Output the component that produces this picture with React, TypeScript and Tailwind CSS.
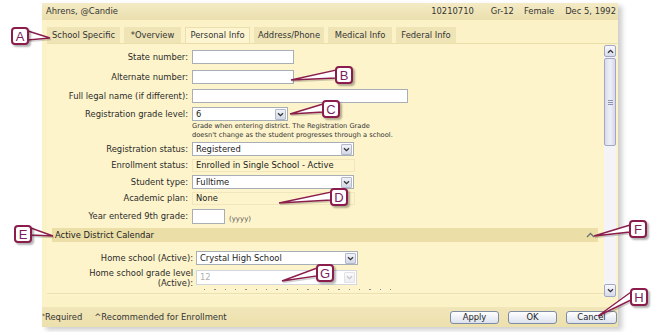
import React from "react";

type Kids = { children?: React.ReactNode };

const tabs = [
  { label: "School Specific", w: "w-[73px]" },
  { label: "*Overview", w: "w-[57px]" },
  { label: "Personal Info", w: "w-[65px]", active: true },
  { label: "Address/Phone", w: "w-[70px]" },
  { label: "Medical Info", w: "w-[64px]" },
  { label: "Federal Info", w: "w-[60px]" },
];

// tip, then two base points on the box edge
const wedges: number[][][] = [
  [[50, 38], [28, 31], [28, 40]],
  [[291, 80], [336, 70], [336, 78]],
  [[290, 114], [323, 104], [323, 112]],
  [[279, 203], [331, 192], [331, 200]],
  [[53, 236], [31, 228], [31, 235]],
  [[594, 236], [630, 225], [630, 232]],
  [[282, 281], [317, 268], [317, 276]],
  [[598, 316], [631, 292], [631, 300]],
];

const callouts = [
  { l: "A", pos: "left-[11px] top-[27px]" },
  { l: "B", pos: "left-[335px] top-[66px]" },
  { l: "C", pos: "left-[322px] top-[100px]" },
  { l: "D", pos: "left-[330px] top-[188px]" },
  { l: "E", pos: "left-[14px] top-[225px]" },
  { l: "F", pos: "left-[629px] top-[220px]" },
  { l: "G", pos: "left-[316px] top-[264px]" },
  { l: "H", pos: "left-[630px] top-[288px]" },
];

function ChevronDown({ color = "#333" }: { color?: string }) {
  return (
    <svg width="7" height="5" viewBox="0 0 7 5">
      <path d="M1 1.2 L3.5 3.7 L6 1.2" stroke={color} strokeWidth="1.3" fill="none" />
    </svg>
  );
}

function ChevronUp({ color = "#333" }: { color?: string }) {
  return (
    <svg width="7" height="5" viewBox="0 0 7 5">
      <path d="M1 3.8 L3.5 1.3 L6 3.8" stroke={color} strokeWidth="1.3" fill="none" />
    </svg>
  );
}

function Input({ className }: { className: string }) {
  return <div className={`border border-[#a8aeb6] bg-white ${className}`} />;
}

function Select({ value, className, disabled }: { value: string; className: string; disabled?: boolean }) {
  return (
    <div
      className={`flex items-center border bg-white ${
        disabled ? "border-[#d3d6dc] text-[#b0b0b0]" : "border-[#a8aeb6] text-[#222]"
      } ${className}`}
    >
      <span className="flex-1 pl-[3px]">{value}</span>
      <div
        className={`mr-[1px] flex h-[11px] w-[11px] items-center justify-center rounded-[1px] border bg-gradient-to-b ${
          disabled ? "border-[#e0e2e8] from-[#fafafc] to-[#eceef3]" : "border-[#b3b9cb] from-[#f1f3f8] to-[#d3d8e6]"
        }`}
      >
        <ChevronDown color={disabled ? "#c4c4c4" : "#333"} />
      </div>
    </div>
  );
}

function ReadOnly({ value }: { value: string }) {
  return (
    <div className="flex h-[13px] w-[163px] items-center border border-[#f1e6bc] pl-[3px] text-[#222]">{value}</div>
  );
}

function Row({ label, gap = "ml-[4px]", className, children }: { label: string; gap?: string; className: string } & Kids) {
  return (
    <div className={`flex items-center ${className}`}>
      <div className="w-[141px] text-right text-[#2a2a2a]">{label}</div>
      <div className={gap}>{children}</div>
    </div>
  );
}

function Button({ label, className }: { label: string; className: string }) {
  return (
    <div
      className={`flex h-[13px] items-center justify-center rounded-[3px] border border-[#7d8ba4] bg-gradient-to-b from-white to-[#dce2ee] text-[#222] ${className}`}
    >
      {label}
    </div>
  );
}

function Scrollbar() {
  return (
    <div className="mt-[1px] mr-[1px] flex h-[252px] w-[12px] flex-col bg-[#f3f3f8]">
      <div className="flex h-[12px] items-center justify-center rounded-[2px] border border-[#a2a7c4] bg-gradient-to-b from-[#f8f8fd] to-[#d7daea]">
        <ChevronUp />
      </div>
      <div className="mt-[1px] flex h-[88px] flex-col items-center justify-center gap-[1px] rounded-[2px] border border-[#a2a7c4] bg-gradient-to-r from-[#d9dbec] via-[#eef0f8] to-[#d6d8e8]">
        <div className="h-px w-[5px] bg-[#8f93ad]" />
        <div className="h-px w-[5px] bg-[#8f93ad]" />
        <div className="h-px w-[5px] bg-[#8f93ad]" />
      </div>
      <div className="flex-1" />
      <div className="flex h-[13px] items-center justify-center rounded-[2px] border border-[#a2a7c4] bg-gradient-to-b from-[#f8f8fd] to-[#d7daea]">
        <ChevronDown />
      </div>
    </div>
  );
}

export default function App() {
  return (
    <div className="relative h-[332px] w-[662px] overflow-hidden bg-white font-['DejaVu_Sans',sans-serif] text-[8.4px] leading-none text-[#333]">
      <div className="ml-[42px] mt-[3px] flex h-[324px] w-[576px] flex-col bg-[#fcf2c7] shadow-[4px_3px_5px_rgba(0,0,0,0.2)]">
        {/* student header */}
        <div className="flex h-[17px] items-center bg-gradient-to-b from-[#f4ebc6] to-[#ebdfad] pl-[4px] pr-[2px]">
          <span>Ahrens, @Candie</span>
          <span className="ml-auto">10210710</span>
          <span className="ml-[17px]">Gr-12</span>
          <span className="ml-[10px]">Female</span>
          <span className="ml-[11px]">Dec 5, 1992</span>
        </div>

        {/* tabs */}
        <div className="flex h-[23px] items-end gap-[4px] pl-[5px]">
          {tabs.map((t) => (
            <div
              key={t.label}
              className={`flex h-[16px] items-center justify-center ${t.w} ${
                t.active ? "border-x border-t border-[#ebdfab] bg-[#fdf5d2]" : "bg-[#efe4b6]"
              }`}
            >
              {t.label}
            </div>
          ))}
        </div>

        {/* tab body */}
        <div className="ml-[5px] flex h-[253px] w-[570px] border-t border-[#eadea9] bg-[#fdf4cb]">
          <div className="flex-1">
            <div className="h-[250px] overflow-hidden border-b border-[#ece1b0]">
              <Row label="State number:" className="mt-[6px] h-[14px]">
                <Input className="h-[14px] w-[102px]" />
              </Row>
              <Row label="Alternate number:" className="mt-[6px] h-[14px]">
                <Input className="h-[14px] w-[102px]" />
              </Row>
              <Row label="Full legal name (if different):" className="mt-[5px] h-[14px]">
                <Input className="h-[14px] w-[216px]" />
              </Row>
              <Row label="Registration grade level:" className="mt-[4px] h-[14px]">
                <Select value="6" className="h-[14px] w-[96px]" />
              </Row>
              <div className="ml-[145px] pt-[1px] text-[6.7px] leading-[9px] text-[#333]">
                <div>Grade when entering district. The Registration Grade</div>
                <div>doesn't change as the student progresses through a school.</div>
              </div>
              <Row label="Registration status:" className="mt-[2px] h-[14px]">
                <Select value="Registered" className="h-[14px] w-[162px]" />
              </Row>
              <Row label="Enrollment status:" className="mt-[3px] h-[13px]">
                <ReadOnly value="Enrolled in Single School - Active" />
              </Row>
              <Row label="Student type:" className="mt-[3px] h-[14px]">
                <Select value="Fulltime" className="h-[14px] w-[162px]" />
              </Row>
              <Row label="Academic plan:" className="mt-[3px] h-[13px]">
                <ReadOnly value="None" />
              </Row>
              <Row label="Year entered 9th grade:" className="mt-[4px] h-[15px]">
                <div className="flex items-end">
                  <Input className="h-[15px] w-[33px]" />
                  <span className="ml-[4px] pb-[1px] text-[7px] text-[#555]">(yyyy)</span>
                </div>
              </Row>

              <div className="ml-[5px] mr-[6px] mt-[4px] flex h-[14px] items-center bg-[#ebdfa7] pl-[3px] pr-[3px]">
                <span className="text-[#222]">Active District Calendar</span>
                <span className="ml-auto">
                  <svg width="9" height="6" viewBox="0 0 9 6">
                    <path d="M1 5 L4.5 1.5 L8 5" stroke="#6f6f6f" strokeWidth="1.3" fill="none" />
                  </svg>
                </span>
              </div>

              <div className="ml-[5px]">
                <Row label="Home school (Active):" gap="ml-[3px]" className="mt-[9px] h-[14px]">
                  <Select value="Crystal High School" className="h-[14px] w-[162px]" />
                </Row>
                <div className="mt-[5px] flex h-[15px] items-center">
                  <div className="w-[141px] text-right leading-[10px] text-[#2a2a2a]">
                    <div>Home school grade level</div>
                    <div>(Active):</div>
                  </div>
                  <div className="ml-[3px]">
                    <Select value="12" disabled className="h-[15px] w-[161px]" />
                  </div>
                </div>
                {/* top edge of the next hint line, scrolled out of view */}
                <div className="ml-[152px] mt-[4px] flex gap-[9px]">
                  {Array.from({ length: 19 }).map((_, i) => (
                    <div key={i} className={`h-px ${i % 3 === 1 ? "w-[2px]" : "w-px"} bg-[#8a8a8a]`} />
                  ))}
                </div>
              </div>
            </div>
          </div>
          <Scrollbar />
        </div>

        <div className="h-[11px]" />

        {/* footer */}
        <div className="flex h-[20px] items-center bg-gradient-to-b from-[#f1e6b8] to-[#ece0ad] pr-[1px]">
          <span>
            <span className="relative -top-[2px] text-[6px]">*</span>Required
          </span>
          <span className="ml-[12px]">^Recommended for Enrollment</span>
          <div className="ml-auto flex gap-[9px]">
            <Button label="Apply" className="w-[49px]" />
            <Button label="OK" className="w-[49px]" />
            <Button label="Cancel" className="w-[51px]" />
          </div>
        </div>
      </div>

      {/* callout pointers */}
      <svg className="pointer-events-none absolute left-0 top-0" width="662" height="332" viewBox="0 0 662 332">
        {wedges.map((w, i) => (
          <polygon
            key={"s" + i}
            points={w.map((p) => `${p[0] + 1},${p[1] + 1.5}`).join(" ")}
            fill="none"
            stroke="rgba(0,0,0,0.18)"
            strokeWidth="1.5"
          />
        ))}
        {wedges.map((w, i) => (
          <polygon
            key={i}
            points={w.map((p) => `${p[0]},${p[1]}`).join(" ")}
            fill="#ffffff"
            stroke="#8a1d4c"
            strokeWidth="1.4"
            strokeLinejoin="miter"
          />
        ))}
      </svg>

      {callouts.map((c) => (
        <div
          key={c.l}
          className={`absolute flex h-[18px] w-[18px] items-center justify-center rounded-[4px] border-2 border-[#8a1d4c] bg-white font-['Liberation_Sans',sans-serif] text-[13px] leading-none text-[#7c1f63] shadow-[2px_2px_2px_rgba(0,0,0,0.3)] ${c.pos}`}
        >
          {c.l}
        </div>
      ))}
    </div>
  );
}
